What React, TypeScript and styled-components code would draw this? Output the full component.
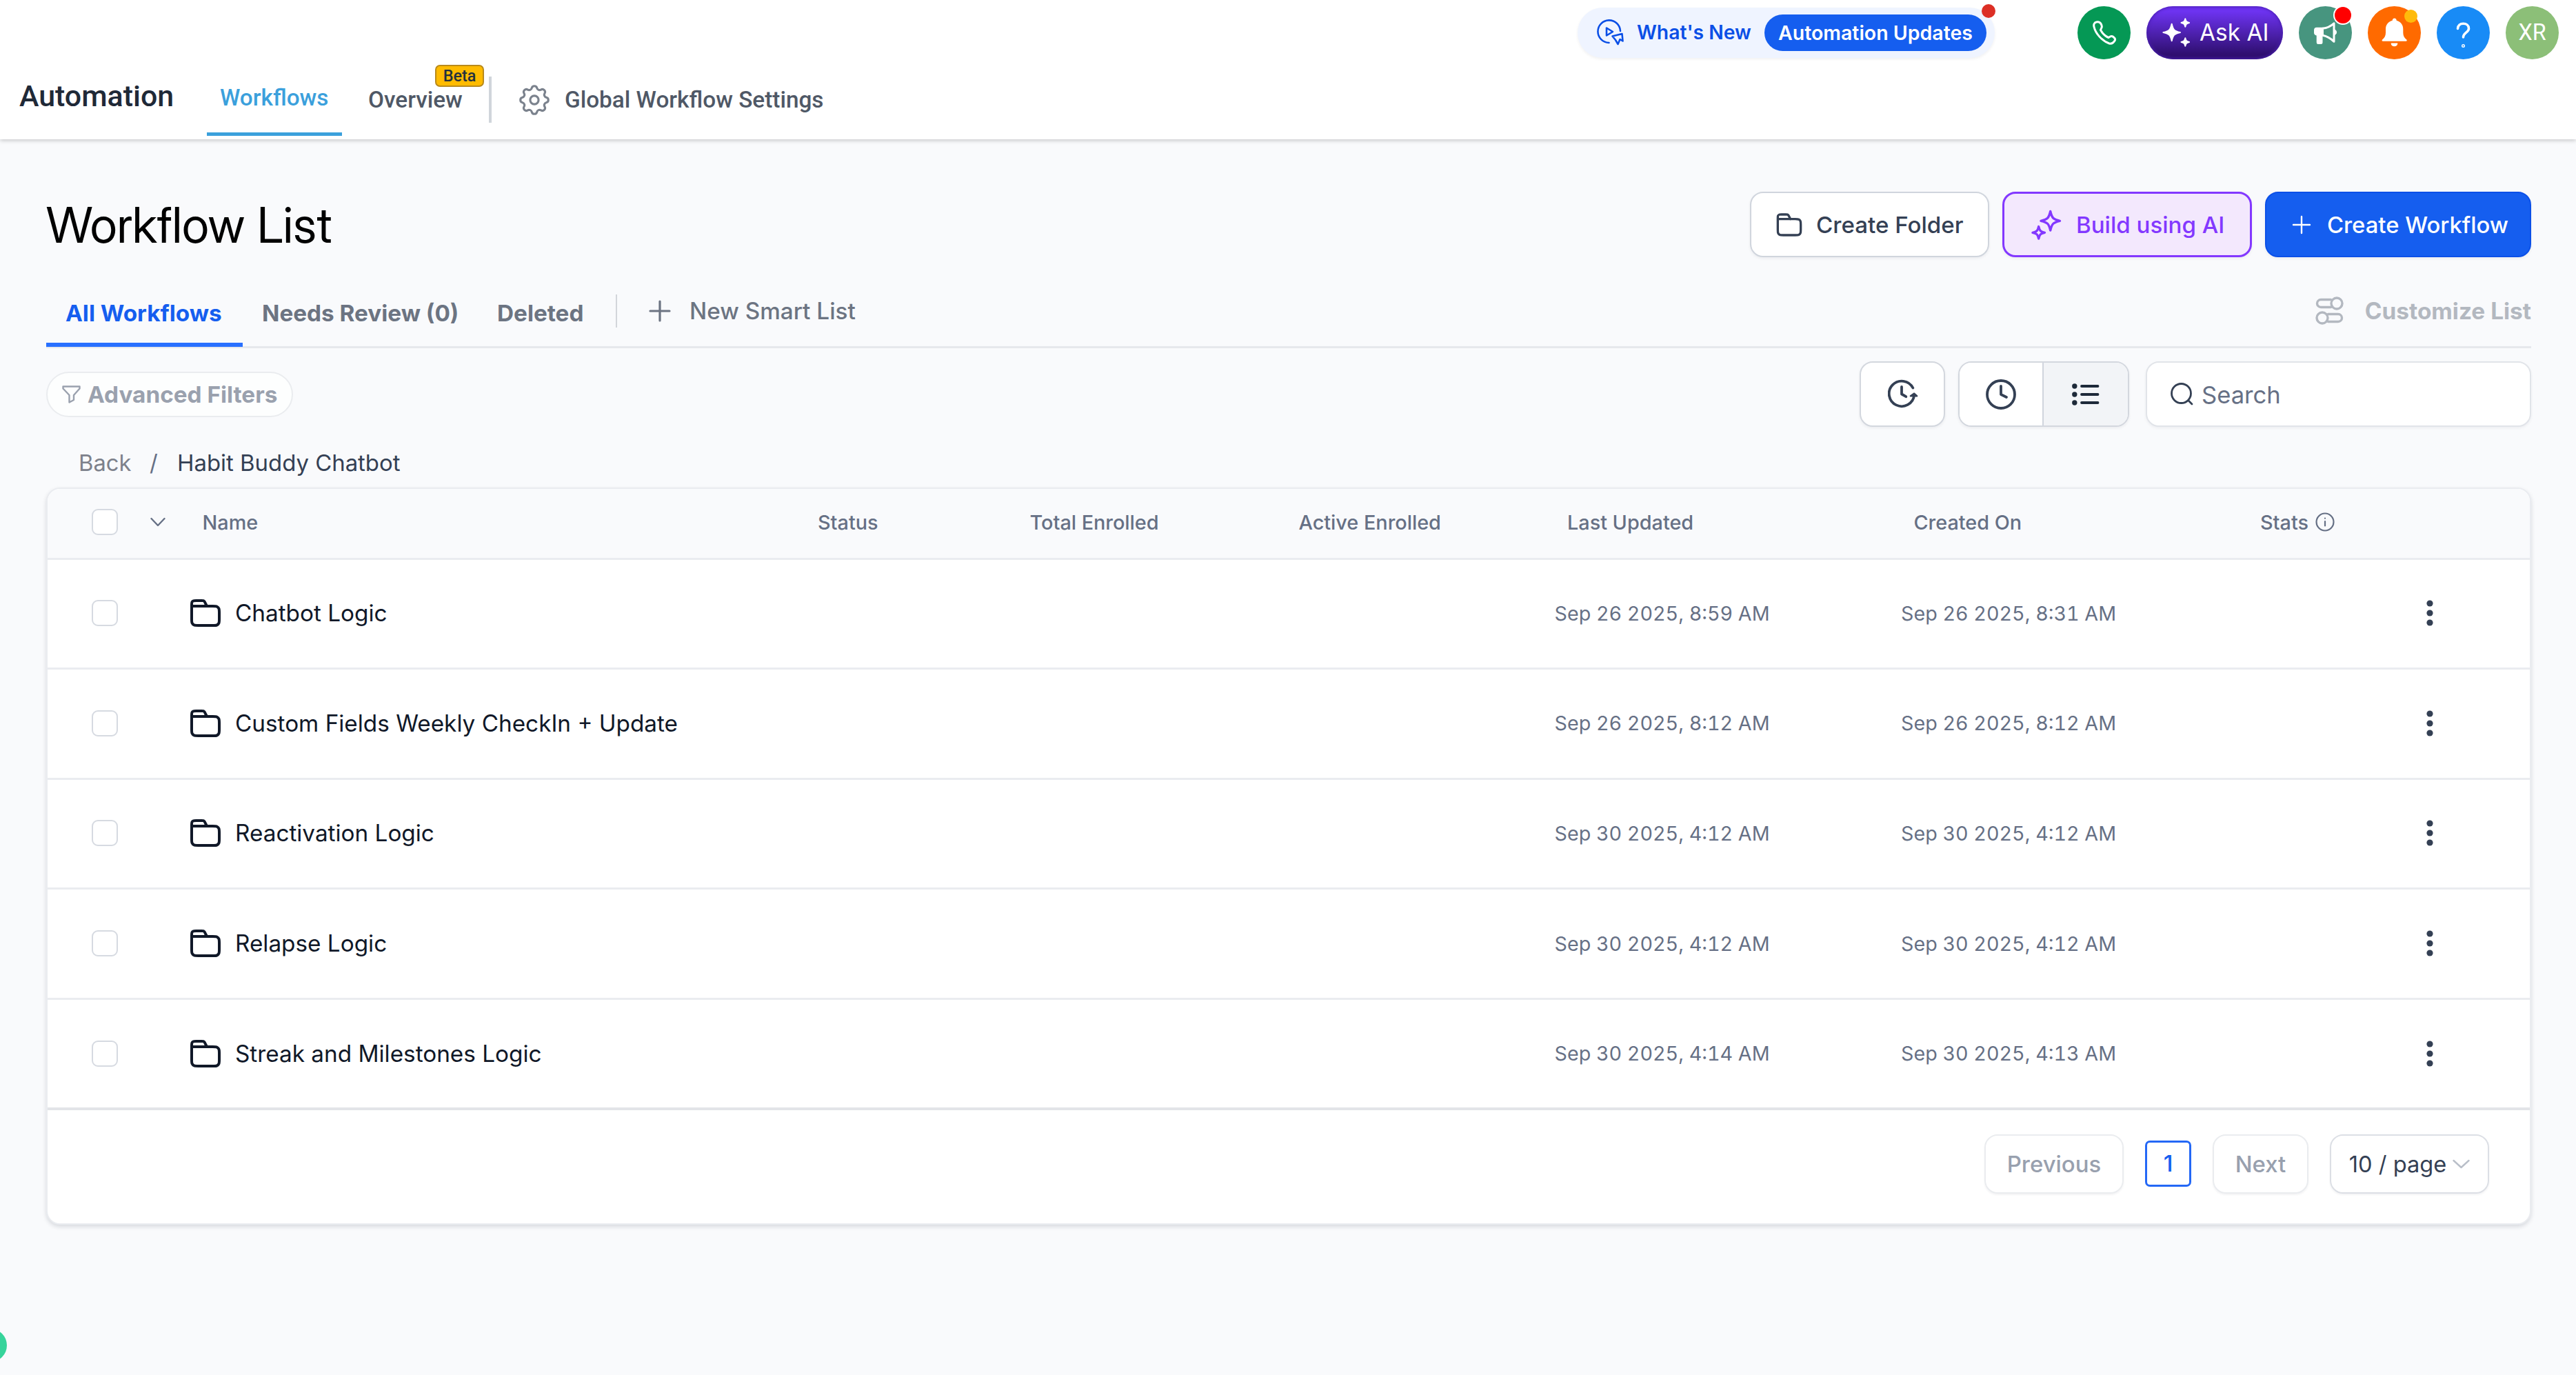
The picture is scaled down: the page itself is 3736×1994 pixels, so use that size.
import React from "react";
import styled, { createGlobalStyle, css } from "styled-components";

const GlobalStyle = createGlobalStyle`
  *, *::before, *::after { box-sizing: border-box; }
  body { margin: 0; background: #f9fafc; font-family: Inter, "Liberation Sans", sans-serif; }
  svg { display: block; flex: none; }
`;

const roboto = css`font-family: Roboto, "Liberation Sans", sans-serif;`;

/* ---------- shell ---------- */
const Page = styled.div`
  position: relative;
  width: 3736px;
  height: 1994px;
  overflow: hidden;
  background: #f9fafc;
`;
const Header = styled.header`
  height: 202px;
  background: #fff;
  box-shadow: 0 2px 6px rgba(0, 0, 0, 0.2);
`;
const TopBar = styled.div`
  display: flex;
  align-items: center;
  justify-content: flex-end;
  gap: 23px;
  height: 94px;
  padding-right: 25px;
`;
const NewsPill = styled.div`
  position: relative;
  display: flex;
  align-items: center;
  width: 605px;
  height: 73px;
  margin-right: 97px;
  padding: 0 12px 0 28px;
  border-radius: 37px;
  background: #eff4ff;
  box-shadow: 0 2px 4px rgba(16, 24, 40, 0.06);
`;
const NewsLabel = styled.span`
  flex: 1;
  margin-left: 19px;
  font-size: 28.3px;
  font-weight: 600;
  color: #0b4fe6;
`;
const NewsBadge = styled.span`
  width: 322px;
  height: 53px;
  border-radius: 27px;
  background: #155eef;
  color: #fff;
  font-size: 28.5px;
  font-weight: 600;
  line-height: 53px;
  text-align: center;
`;
const Dot = styled.i<{ $size: number; $top: number; $right: number; $color: string; $ring?: boolean }>`
  position: absolute;
  top: ${(p) => p.$top}px;
  right: ${(p) => p.$right}px;
  width: ${(p) => p.$size}px;
  height: ${(p) => p.$size}px;
  border-radius: 50%;
  background: ${(p) => p.$color};
  ${(p) => p.$ring && "box-shadow: 0 0 0 2px #fff;"}
`;
const Circle = styled.div<{ $bg: string }>`
  position: relative;
  display: flex;
  align-items: center;
  justify-content: center;
  width: 77px;
  height: 77px;
  border-radius: 50%;
  background: ${(p) => p.$bg};
  color: #fff;
  font-size: 32.3px;
  ${roboto}
`;
const AskAi = styled.div`
  display: flex;
  align-items: center;
  gap: 14px;
  width: 198px;
  height: 77px;
  padding-left: 23px;
  border-radius: 39px;
  background: linear-gradient(180deg, #6d33f0 10%, #2f0f70 90%);
  box-shadow: inset 0 0 4px 1px #4a1fb0;
  color: #fff;
  font-size: 33.4px;
  white-space: nowrap;
`;

/* ---------- module navigation ---------- */
const Nav = styled.nav`
  display: flex;
  align-items: flex-start;
  height: 108px;
  padding-left: 28px;
  ${roboto}
  font-size: 33.35px;
  font-weight: 500;
  color: #4f5866;
`;
const NavTitle = styled.h1`
  width: 272px;
  margin: 0;
  font-size: 42.9px;
  font-weight: 500;
  line-height: 91px;
  color: #1f2937;
`;
const NavTab = styled.div<{ $active?: boolean }>`
  position: relative;
  height: 103px;
  padding: 0 19px;
  line-height: ${(p) => (p.$active ? 95 : 101)}px;
  ${(p) => p.$active && "width: 196px; color: #3ba0dc; border-bottom: 5px solid #3ba0dc;"}
`;
const OverviewTab = styled(NavTab)`
  width: 213px;
  padding-left: 38px;
`;
const BetaTag = styled.span`
  position: absolute;
  top: 0;
  left: 135px;
  width: 71px;
  height: 32px;
  border: 2px solid #b98a1a;
  border-radius: 7px;
  background: #ffbb00;
  color: #23303f;
  font-size: 23.4px;
  line-height: 28px;
  text-align: center;
`;
const NavDivider = styled.div`
  width: 4px;
  height: 67px;
  margin-top: 17px;
  background: #d0d5db;
`;
const NavSettings = styled.div`
  display: flex;
  align-items: center;
  height: 101px;
  margin-left: 35px;
  gap: 17px;
`;

/* ---------- page heading ---------- */
const Main = styled.main`
  padding: 76px 65px 0 67px;
`;
const TitleRow = styled.div`
  display: flex;
  align-items: center;
  gap: 19px;
  height: 95px;
`;
const Title = styled.h2`
  flex: 1;
  margin: 0;
  font-family: "Inter Display", Inter, sans-serif;
  font-size: 70.9px;
  font-weight: 400;
  line-height: 96px;
  color: #000;
`;
const Button = styled.button<{ $tone: "plain" | "violet" | "blue"; $width: number; $pad: number; $gap: number }>`
  display: flex;
  align-items: center;
  gap: ${(p) => p.$gap}px;
  width: ${(p) => p.$width}px;
  height: 95px;
  padding: 0 0 0 ${(p) => p.$pad}px;
  border-radius: 19px;
  font: 500 33.1px Inter, sans-serif;
  white-space: nowrap;
  box-shadow: 0 2px 4px rgba(16, 24, 40, 0.06);
  ${(p) => p.$tone === "plain" && "background:#fff;border:2px solid #d0d5dd;color:#344054;"}
  ${(p) => p.$tone === "violet" && "background:#f3e8fd;border:3px solid #8338ff;color:#8338ff;"}
  ${(p) => p.$tone === "blue" && "background:#155eef;border:2px solid #0b50e8;color:#fff;font-size:32.8px;"}
`;

/* ---------- list tabs ---------- */
const Tabs = styled.div`
  display: flex;
  height: 132px;
  padding-top: 27px;
  border-bottom: 3px solid #e6e8ec;
  font-size: 33.3px;
  color: #6c7482;
`;
const Tab = styled.div<{ $active?: boolean; $width: number }>`
  width: ${(p) => p.$width}px;
  height: 103px;
  padding-left: 28px;
  line-height: 108px;
  font-weight: 700;
  white-space: nowrap;
  ${(p) => p.$active && "color:#155eef;border-bottom:6px solid #2970ff;"}
`;
const TabDivider = styled.div`
  width: 2px;
  height: 48px;
  margin: 27px 46px 0 0;
  background: #d3d6db;
`;
const TabAction = styled.div<{ $muted?: boolean }>`
  display: flex;
  align-items: center;
  gap: ${(p) => (p.$muted ? 31 : 27)}px;
  height: 101px;
  font-size: ${(p) => (p.$muted ? 33.4 : 33.3)}px;
  font-weight: ${(p) => (p.$muted ? 700 : 500)};
  ${(p) => p.$muted && "margin-left:auto;color:#b3b8c0;"}
`;

/* ---------- toolbar ---------- */
const Toolbar = styled.div`
  display: flex;
  align-items: center;
  height: 95px;
  margin-top: 19px;
`;
const FilterPill = styled.div`
  display: flex;
  align-items: center;
  gap: 10px;
  width: 358px;
  height: 66px;
  margin-right: auto;
  padding-left: 21px;
  border: 2px solid #eaecef;
  border-radius: 33px;
  background: #fdfefe;
  color: #9aa1ae;
  font-size: 33.3px;
  font-weight: 700;
`;
const IconButton = styled.div`
  display: flex;
  align-items: center;
  justify-content: center;
  width: 124px;
  height: 95px;
  margin-right: 19px;
  padding-left: 3px;
  border: 2px solid #d3d7de;
  border-radius: 19px;
  background: #fff;
  box-shadow: 0 2px 4px rgba(16, 24, 40, 0.06);
`;
const Segments = styled.div`
  display: flex;
  width: 248px;
  height: 95px;
  margin-right: 24px;
  overflow: hidden;
  border: 2px solid #d3d7de;
  border-radius: 19px;
  box-shadow: 0 2px 4px rgba(16, 24, 40, 0.06);
`;
const Segment = styled.div<{ $on?: boolean }>`
  display: flex;
  width: ${(p) => (p.$on ? 124 : 120)}px;
  align-items: center;
  justify-content: center;
  background: ${(p) => (p.$on ? "#f2f4f7" : "#fff")};
  ${(p) => p.$on && "border-left: 2px solid #d0d5dd;"}
`;
const SearchBox = styled.div`
  display: flex;
  align-items: center;
  gap: 12px;
  width: 559px;
  height: 95px;
  padding-left: 34px;
  border: 2px solid #e1e4e9;
  border-radius: 19px;
  background: #fff;
  box-shadow: 0 2px 4px rgba(16, 24, 40, 0.05);
  color: #667085;
  font-size: 34.6px;
`;
const Crumbs = styled.div`
  display: flex;
  height: 88px;
  padding: 18px 0 0 47px;
  font-size: 32.7px;
  line-height: 69px;
  color: #7d818b;
  span { width: 104px; }
  i { width: 40px; font-style: normal; color: #667085; margin-left: -1px; }
  b { font-size: 32.9px; font-weight: 400; color: #344054; }
`;

/* ---------- table ---------- */
const Card = styled.section`
  overflow: hidden;
  height: 1069px;
  border: 2px solid #eaecf0;
  border-radius: 20px;
  background: #fff;
  box-shadow: 0 3px 6px rgba(16, 24, 40, 0.14);
`;
const GridRow = styled.div`
  display: grid;
  grid-template-columns: 187px 892.5px 307.5px 390px 389.5px 502.5px 502.5px 1fr;
  align-items: center;
`;
const HeadRow = styled(GridRow)`
  height: 102.5px;
  padding-bottom: 3px;
  border-bottom: 3px solid #eaecf0;
  background: #f9fafc;
  color: #667085;
  font-size: 28.8px;
  font-weight: 500;
`;
const HeadCell = styled.div`
  display: flex;
  align-items: center;
  gap: 10px;
  padding-left: 37.5px;
`;
const BodyRow = styled(GridRow)`
  height: 159.6px;
  padding-bottom: 1px;
  border-bottom: 3px solid #eaecf0;
  &:last-of-type { border-color: #e2e4e8; border-width: 4px; height: 160.5px; }
`;
const SelectCell = styled.div`
  display: flex;
  align-items: center;
  gap: 47px;
  padding-left: 64px;
`;
const Checkbox = styled.div`
  width: 38px;
  height: 38px;
  border: 2px solid #d6dae1;
  border-radius: 9px;
  background: #fff;
`;
const NameCell = styled.div`
  display: flex;
  align-items: center;
  gap: 19px;
  padding-left: 18px;
  font-size: 33.3px;
  line-height: 40px;
  color: #101828;
`;
const DateCell = styled.div`
  padding-left: 19px;
  font-size: 28.7px;
  font-variant-numeric: tabular-nums;
  color: #667085;
`;
const MenuCell = styled.div`
  padding-left: 278px;
`;
const Footer = styled.div`
  display: flex;
  align-items: center;
  justify-content: flex-end;
  gap: 31px;
  height: 155px;
  padding-right: 59px;
`;
const PageButton = styled.div<{ $width: number; $strong?: boolean }>`
  display: flex;
  align-items: center;
  justify-content: center;
  gap: 9px;
  width: ${(p) => p.$width}px;
  height: 86px;
  border: 2px solid ${(p) => (p.$strong ? "#dcdfe5" : "#eaecef")};
  border-radius: 19px;
  color: ${(p) => (p.$strong ? "#344054" : "#98a0ae")};
  font-size: ${(p) => (p.$strong ? 32.6 : 32.9)}px;
  font-weight: ${(p) => (p.$strong ? 400 : 500)};
  box-shadow: 0 2px 3px rgba(16, 24, 40, 0.05);
`;
const CurrentPage = styled.div`
  width: 67px;
  height: 67px;
  border: 3px solid #2468f6;
  border-radius: 7px;
  color: #155eef;
  font-size: 33px;
  font-weight: 500;
  line-height: 61px;
  text-align: center;
`;
const ChatBubble = styled.div`
  position: absolute;
  left: -38px;
  top: 1927px;
  width: 48px;
  height: 48px;
  border-radius: 50%;
  background: #37d49b;
`;

/* ---------- icons ---------- */
const stroke = { fill: "none", stroke: "currentColor", strokeLinecap: "round", strokeLinejoin: "round" } as const;

const star = (x: number, y: number, r: number) => {
  const a = r * 0.16, b = r * 0.3;
  return `M${x} ${y - r}C${x + a} ${y - b} ${x + b} ${y - a} ${x + r} ${y}C${x + b} ${y + a} ${x + a} ${y + b} ${x} ${y + r}C${x - a} ${y + b} ${x - b} ${y + a} ${x - r} ${y}C${x - b} ${y - a} ${x - a} ${y - b} ${x} ${y - r}Z`;
};

const FolderIcon = ({ size, color }: { size: number; color: string }) => (
  <svg width={size} height={size} viewBox="0 0 24 24" {...stroke} stroke={color} strokeWidth={2}>
    <path d="M13 7L11.88 4.77C11.56 4.13 11.4 3.81 11.16 3.57C10.95 3.36 10.7 3.2 10.42 3.11C10.1 3 9.74 3 9.02 3H5.2C4.08 3 3.52 3 3.09 3.22C2.72 3.41 2.41 3.72 2.22 4.09C2 4.52 2 5.08 2 6.2V7M2 7H17.2C18.88 7 19.72 7 20.36 7.33C20.93 7.61 21.39 8.07 21.67 8.64C22 9.28 22 10.12 22 11.8V16.2C22 17.88 22 18.72 21.67 19.36C21.39 19.93 20.93 20.39 20.36 20.67C19.72 21 18.88 21 17.2 21H6.8C5.12 21 4.28 21 3.64 20.67C3.07 20.39 2.61 19.93 2.33 19.36C2 18.72 2 17.88 2 16.2V7Z" />
  </svg>
);
const GearIcon = () => (
  <svg width="54" height="54" viewBox="0 0 24 24" {...stroke} stroke="#7b828d" strokeWidth={1.4}>
    <path d="M10.325 4.317c.426-1.756 2.924-1.756 3.35 0a1.724 1.724 0 002.573 1.066c1.543-.94 3.31.826 2.37 2.37a1.724 1.724 0 001.065 2.572c1.756.426 1.756 2.924 0 3.35a1.724 1.724 0 00-1.066 2.573c.94 1.543-.826 3.31-2.37 2.37a1.724 1.724 0 00-2.572 1.065c-.426 1.756-2.924 1.756-3.35 0a1.724 1.724 0 00-2.573-1.066c-1.543.94-3.31-.826-2.37-2.37a1.724 1.724 0 00-1.065-2.572c-1.756-.426-1.756-2.924 0-3.35a1.724 1.724 0 001.066-2.573c-.94-1.543.826-3.31 2.37-2.37.996.608 2.296.07 2.572-1.065z" />
    <circle cx="12" cy="12" r="2.7" />
  </svg>
);
const PlayCursorIcon = () => (
  <svg width="39" height="38" viewBox="0 0 39 38" {...stroke} stroke="#0b4fe6" strokeWidth={2.6}>
    <path d="M34 17A16.3 16.3 0 1 0 17.500 34" />
    <path d="M14 12.500v11l9-5.500z" />
    <path d="M22.500 24.500l14-3.500 1 10.500-4-2.500-3 7-3.500-6z" />
  </svg>
);
const PhoneIcon = () => (
  <svg width="77" height="77" viewBox="0 0 77 77" {...stroke} strokeWidth={3}>
    <path d="M27.5 23C24.5 23.5 23 26.5 24 30C26 39 35 50 46 54C50 55 53 52 54.5 49C55 47 54 46 52 44.5C50 43 49 43 47.5 44L45 45.5C41 44 36 39 33.5 34.5L35 31C35.8 29.5 35.3 28 34.3 26C33 23.5 30.5 22.5 27.5 23Z" />
  </svg>
);
const AiSparkIcon = () => (
  <svg width="40" height="42" viewBox="0 0 40 42" fill="#fff" stroke="#fff" strokeWidth="2" strokeLinejoin="round">
    <path d={star(13.7, 21, 12.3)} />
    <path d={star(33.3, 7, 5.8)} />
    <path d={star(33.3, 35, 5.8)} />
  </svg>
);
const MegaphoneIcon = () => (
  <svg width="77" height="77" viewBox="0 0 77 77">
    <path d="M26 30.7H35.5V42.5H34.5V52.5Q34.5 55 32 55H28Q25.7 55 25.7 52.5V42.5Q22 41.5 22 38.5V34.7Q22 30.7 26 30.7Z" fill="#fff" />
    <path d="M34.5 32.3C41 31.5 47 28.5 51 24.8V51.3C47 47.5 41 43.5 34.5 42.3Z" fill="none" stroke="#fff" strokeWidth="3" strokeLinejoin="round" />
    <path d="M52 34a4 4 0 0 1 0 7.5z" fill="#fff" stroke="#fff" />
  </svg>
);
const BellIcon = () => (
  <svg width="77" height="77" viewBox="0 0 77 77" fill="#fff">
    <path d="M38.7 17.5c2 0 3 1.3 3 3.3c6 1.5 9.6 6 9.6 12.7v5c0 4.5 1.7 7.3 5 10q1.2 2.2-1 2.2H22q-2.2 0-1-2.2c3.3-2.7 5-5.5 5-10v-5c0-6.7 3.7-11.2 9.7-12.7c0-2 1-3.3 3-3.3z" />
    <path d="M33.6 53.5h9.8q-.4 4.8-4.9 4.8t-4.9-4.8z" />
  </svg>
);
const HelpIcon = () => (
  <svg width="77" height="77" viewBox="0 0 77 77" {...stroke} strokeWidth={3.6}>
    <path d="M30.5 32.5c.2-4.500 3.500-7.300 8-7.300s8 2.900 8 7.200c0 5.500-8 6.200-8 12.600" />
    <circle cx="38.500" cy="57.500" r="0.700" />
  </svg>
);
const BuildSparkIcon = () => (
  <svg width="44" height="44" viewBox="0 0 44 44" {...stroke} strokeWidth={3.4}>
    <path d={star(27.7, 16.3, 13.8)} />
    <path d={star(10.7, 33.3, 8.7)} />
  </svg>
);
const PlusIcon = ({ size, width }: { size: number; width: number }) => (
  <svg width={size} height={size} viewBox={`0 0 ${size} ${size}`} {...stroke} strokeWidth={width}>
    <path d={`M${size / 2} 2V${size - 2}M2 ${size / 2}H${size - 2}`} />
  </svg>
);
const SlidersIcon = () => (
  <svg width="41" height="41" viewBox="0 0 41 41" {...stroke} strokeWidth={3.4}>
    <path d="M22.500 4.500H8a5.500 5.500 0 0 0 0 11h14.500" />
    <circle cx="31" cy="10" r="8" />
    <path d="M18.500 25.500H33a5.500 5.500 0 0 1 0 11H18.500" />
    <circle cx="10" cy="31" r="8" />
  </svg>
);
const FunnelIcon = () => (
  <svg width="27" height="26" viewBox="0 0 27 26" {...stroke} strokeWidth={2.4}>
    <path d="M1.500 1.500H25.500V4.500L17 14V21L10.500 24.500V14L1.500 4.500Z" />
  </svg>
);
const ClockRefreshIcon = () => (
  <svg width="46" height="44" viewBox="0 0 46 44" {...stroke} stroke="#344054" strokeWidth={3.8}>
    <path d="M36.300 12.500A18.300 18.300 0 1 0 38.200 23" />
    <path d="M33 24.300L38 20.700L42 24.300Z" fill="#344054" strokeWidth={2.600} />
    <path d="M20 11v10.500l6.300 3.700" />
  </svg>
);
const ClockIcon = () => (
  <svg width="48" height="48" viewBox="0 0 24 24" {...stroke} stroke="#344054" strokeWidth={1.9}>
    <circle cx="12" cy="12" r="10" />
    <path d="M12 6v6l4 2" />
  </svg>
);
const ListIcon = () => (
  <svg width="40" height="32" viewBox="0 0 40 32" {...stroke} stroke="#1d2939" strokeWidth={3.8}>
    {[4, 16, 28].map((y) => (
      <React.Fragment key={y}>
        <circle cx="3.800" cy={y} r="3.700" fill="#1d2939" stroke="none" />
        <path d={`M14 ${y}H37.500`} />
      </React.Fragment>
    ))}
  </svg>
);
const SearchIcon = () => (
  <svg width="33" height="33" viewBox="0 0 33 33" {...stroke} stroke="#344054" strokeWidth={2.8}>
    <circle cx="15.500" cy="15.500" r="14" />
    <path d="M25.800 25.800L31 31" />
  </svg>
);
const ChevronIcon = ({ w, color }: { w: number; color: string }) => (
  <svg width={w} height={14} viewBox={`0 0 ${w} 14`} {...stroke} stroke={color} strokeWidth={2.4}>
    <path d={`M1.500 2L${w / 2} 12L${w - 1.5} 2`} />
  </svg>
);
const InfoIcon = () => (
  <svg width="28" height="28" viewBox="0 0 28 28" {...stroke} strokeWidth={2.2}>
    <circle cx="14" cy="14" r="12.500" />
    <path d="M14 13v6.500M14 8.500v.2" />
  </svg>
);
const DotsIcon = () => (
  <svg width="10" height="38" viewBox="0 0 10 38" fill="#344054">
    <circle cx="5" cy="5" r="4.600" />
    <circle cx="5" cy="19" r="4.600" />
    <circle cx="5" cy="33" r="4.600" />
  </svg>
);

const rows = [
  ["Chatbot Logic", "Sep 26 2025, 8:59 AM", "Sep 26 2025, 8:31 AM"],
  ["Custom Fields Weekly CheckIn + Update", "Sep 26 2025, 8:12 AM", "Sep 26 2025, 8:12 AM"],
  ["Reactivation Logic", "Sep 30 2025, 4:12 AM", "Sep 30 2025, 4:12 AM"],
  ["Relapse Logic", "Sep 30 2025, 4:12 AM", "Sep 30 2025, 4:12 AM"],
  ["Streak and Milestones Logic", "Sep 30 2025, 4:14 AM", "Sep 30 2025, 4:13 AM"],
];

export default function App() {
  return (
    <Page>
      <GlobalStyle />
      <Header>
        <TopBar>
          <NewsPill>
            <PlayCursorIcon />
            <NewsLabel>What's New</NewsLabel>
            <NewsBadge>Automation Updates</NewsBadge>
            <Dot $size={20} $top={-5} $right={-1} $color="#dc2f25" />
          </NewsPill>
          <Circle $bg="#059855"><PhoneIcon /></Circle>
          <AskAi><AiSparkIcon />Ask AI</AskAi>
          <Circle $bg="#47957f"><MegaphoneIcon /><Dot $size={24} $top={1} $right={1} $color="#ff0000" $ring /></Circle>
          <Circle $bg="#ff6a00"><BellIcon /><Dot $size={19} $top={5} $right={5} $color="#ffbb0b" /></Circle>
          <Circle $bg="#188bf6"><HelpIcon /></Circle>
          <Circle $bg="#8cbf78">XR</Circle>
        </TopBar>
        <Nav>
          <NavTitle>Automation</NavTitle>
          <NavTab $active>Workflows</NavTab>
          <OverviewTab>Overview<BetaTag>Beta</BetaTag></OverviewTab>
          <NavDivider />
          <NavSettings><GearIcon />Global Workflow Settings</NavSettings>
        </Nav>
      </Header>
      <Main>
        <TitleRow>
          <Title>Workflow List</Title>
          <Button $tone="plain" $width={347} $pad={35} $gap={19}><FolderIcon size={40} color="#344054" />Create Folder</Button>
          <Button $tone="violet" $width={362} $pad={39} $gap={21}><BuildSparkIcon />Build using AI</Button>
          <Button $tone="blue" $width={386} $pad={37} $gap={23}><PlusIcon size={28} width={2.4} />Create Workflow</Button>
        </TitleRow>
        <Tabs>
          <Tab $active $width={285}>All Workflows</Tab>
          <Tab $width={341}>Needs Review (0)</Tab>
          <Tab $width={200}>Deleted</Tab>
          <TabDivider />
          <TabAction><PlusIcon size={32} width={3.2} />New Smart List</TabAction>
          <TabAction $muted><SlidersIcon />Customize List</TabAction>
        </Tabs>
        <Toolbar>
          <FilterPill><FunnelIcon />Advanced Filters</FilterPill>
          <IconButton><ClockRefreshIcon /></IconButton>
          <Segments>
            <Segment><ClockIcon /></Segment>
            <Segment $on><ListIcon /></Segment>
          </Segments>
          <SearchBox><SearchIcon />Search</SearchBox>
        </Toolbar>
        <Crumbs><span>Back</span><i>/</i><b>Habit Buddy Chatbot</b></Crumbs>
        <Card>
          <HeadRow>
            <SelectCell><Checkbox /><ChevronIcon w={22} color="#667085" /></SelectCell>
            <HeadCell>Name</HeadCell>
            <HeadCell>Status</HeadCell>
            <HeadCell>Total Enrolled</HeadCell>
            <HeadCell>Active Enrolled</HeadCell>
            <HeadCell>Last Updated</HeadCell>
            <HeadCell>Created On</HeadCell>
            <HeadCell>Stats<InfoIcon /></HeadCell>
          </HeadRow>
          <div>
            {rows.map(([name, updated, created]) => (
              <BodyRow key={name}>
                <SelectCell><Checkbox /></SelectCell>
                <NameCell><FolderIcon size={48} color="#101828" />{name}</NameCell>
                <div /><div /><div />
                <DateCell>{updated}</DateCell>
                <DateCell>{created}</DateCell>
                <MenuCell><DotsIcon /></MenuCell>
              </BodyRow>
            ))}
          </div>
          <Footer>
            <PageButton $width={202}>Previous</PageButton>
            <CurrentPage>1</CurrentPage>
            <PageButton $width={139}>Next</PageButton>
            <PageButton $width={231} $strong>10 / page<ChevronIcon w={25} color="#b9bfc9" /></PageButton>
          </Footer>
        </Card>
      </Main>
      <ChatBubble />
    </Page>
  );
}
